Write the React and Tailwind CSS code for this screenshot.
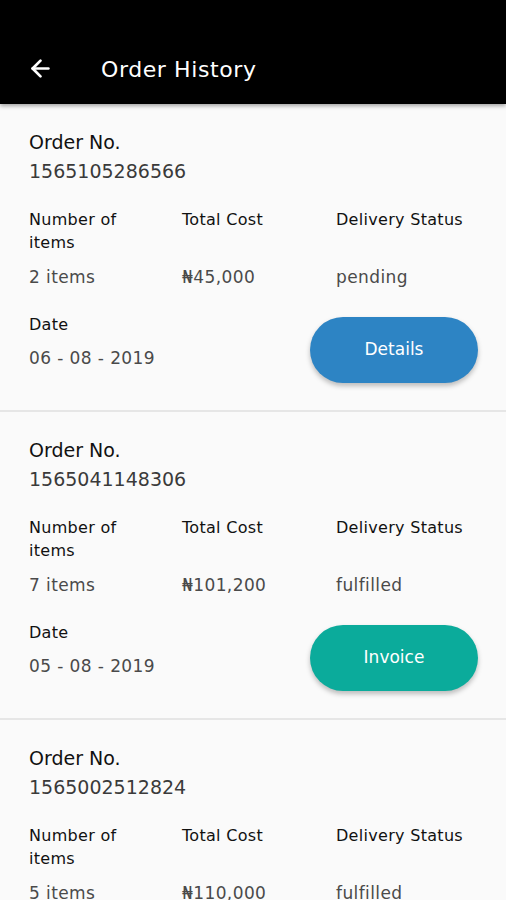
import { ArrowLeft } from "lucide-react";

const orders = [
  { no: "1565105286566", items: "2 items", cost: "₦45,000", status: "pending", date: "06 - 08 - 2019", action: "Details" },
  { no: "1565041148306", items: "7 items", cost: "₦101,200", status: "fulfilled", date: "05 - 08 - 2019", action: "Invoice" },
  { no: "1565002512824", items: "5 items", cost: "₦110,000", status: "fulfilled", date: "04 - 08 - 2019", action: "Invoice" },
];

function OrderCard({ order }) {
  const isDetails = order.action === "Details";
  return (
    <div className="border-b-2 border-[#e6e6e6] pl-[29px] pr-[28px] pt-[24px] pb-[27px]">
      <p className="text-[19px] leading-[29px] font-medium text-[#111]">Order No.</p>
      <p className="text-[19px] leading-[29px] text-[#3a3a3a]">{order.no}</p>

      <div className="mt-[22px] grid grid-cols-[153px_154px_1fr] text-[16px] tracking-[0.3px]">
        <p className="font-medium leading-[23px] text-[#111] w-[110px]">Number of items</p>
        <p className="font-medium leading-[23px] text-[#111]">Total Cost</p>
        <p className="font-medium leading-[23px] text-[#111] whitespace-nowrap">Delivery Status</p>
        <p className="mt-[10px] text-[17px] leading-[26px] text-[#4a4a4a] tracking-[0.4px]">{order.items}</p>
        <p className="mt-[10px] text-[17px] leading-[26px] text-[#4a4a4a] tracking-[0.4px]">{order.cost}</p>
        <p className="mt-[10px] text-[17px] leading-[26px] text-[#4a4a4a] tracking-[0.4px]">{order.status}</p>
      </div>

      <div className="mt-[23px] flex items-start justify-between">
        <div>
          <p className="text-[16px] leading-[24px] font-medium text-[#111] tracking-[0.3px]">Date</p>
          <p className="mt-[8px] text-[17px] leading-[26px] text-[#4a4a4a] tracking-[0.4px]">{order.date}</p>
        </div>
        <button
          className={
            "mt-[4px] h-[66px] w-[168px] rounded-full text-[17px] text-white shadow-[0_3px_5px_rgba(0,0,0,0.25)] " +
            (isDetails ? "bg-[#2d84c4]" : "bg-[#0bab9b]")
          }
        >
          {order.action}
        </button>
      </div>
    </div>
  );
}

export default function App() {
  return (
    <div className="h-[900px] overflow-hidden bg-[#fafafa]" style={{ fontFamily: '"DejaVu Sans", "Open Sans", sans-serif' }}>
      <header className="relative z-10 flex h-[104px] items-end bg-black pb-[19px] shadow-[0_2px_4px_rgba(0,0,0,0.35)]">
        <ArrowLeft className="ml-[27px] mb-[3px] text-white" size={27} strokeWidth={2.4} />
        <h1 className="ml-[47px] text-[22px] leading-[30px] tracking-[0.6px] text-white">Order History</h1>
      </header>
      <main>
        {orders.map((o) => (
          <OrderCard key={o.no} order={o} />
        ))}
      </main>
    </div>
  );
}
